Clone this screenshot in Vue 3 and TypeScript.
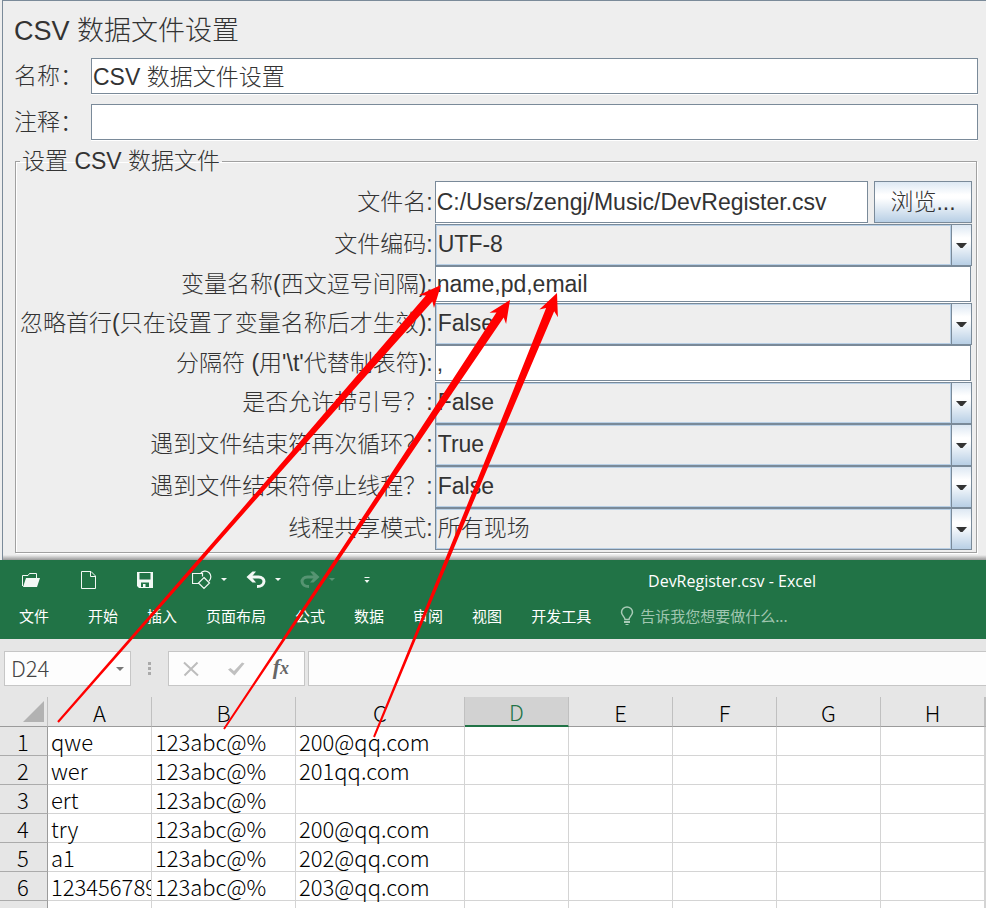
<script setup lang="ts">
import { reactive, ref } from 'vue'

interface Field {
  id: string
  label: string
  kind: 'file' | 'text' | 'select'
  value: string
  options?: string[]
}

interface Arrow {
  from: [number, number]
  to: [number, number]
}

const element = reactive({ name: 'CSV 数据文件设置', comment: '' })

const fields = reactive<Field[]>([
  { id: 'filename', label: '文件名:', kind: 'file', value: 'C:/Users/zengj/Music/DevRegister.csv' },
  { id: 'encoding', label: '文件编码:', kind: 'select', value: 'UTF-8', options: ['UTF-8'] },
  { id: 'variables', label: '变量名称(西文逗号间隔):', kind: 'text', value: 'name,pd,email' },
  { id: 'ignore-first', label: '忽略首行(只在设置了变量名称后才生效):', kind: 'select', value: 'False', options: ['True', 'False'] },
  { id: 'delimiter', label: "分隔符 (用'\\t'代替制表符):", kind: 'text', value: ',' },
  { id: 'quoted', label: '是否允许带引号？:', kind: 'select', value: 'False', options: ['True', 'False'] },
  { id: 'recycle', label: '遇到文件结束符再次循环？:', kind: 'select', value: 'True', options: ['True', 'False'] },
  { id: 'stop-thread', label: '遇到文件结束符停止线程？:', kind: 'select', value: 'False', options: ['True', 'False'] },
  { id: 'share-mode', label: '线程共享模式:', kind: 'select', value: '所有现场', options: ['所有现场'] },
])

const tabs = ['开始', '插入', '页面布局', '公式', '数据', '审阅', '视图', '开发工具']
const cellName = ref('D24')
const formula = ref('')
const columns = ['A', 'B', 'C', 'D', 'E', 'F', 'G', 'H']
const rows: string[][] = [
  ['qwe', '123abc@%', '200@qq.com'],
  ['wer', '123abc@%', '201qq.com'],
  ['ert', '123abc@%', ''],
  ['try', '123abc@%', '200@qq.com'],
  ['a1', '123abc@%', '202@qq.com'],
  ['123456789', '123abc@%', '203@qq.com'],
]

const arrows: Arrow[] = [
  { from: [58, 722], to: [441, 285] },
  { from: [224, 729], to: [510, 300] },
  { from: [374, 737], to: [557, 293] },
]

// Outline of an arrow whose shaft widens towards the head.
function arrowPath({ from, to }: Arrow): string {
  const dx = from[0] - to[0]
  const dy = from[1] - to[1]
  const len = Math.hypot(dx, dy)
  const ux = dx / len
  const uy = dy / len
  const at = (along: number, side: number): string =>
    `${(to[0] + ux * along - uy * side).toFixed(1)} ${(to[1] + uy * along + ux * side).toFixed(1)}`
  const neck = 18
  const mid = (len + neck) / 2
  return [
    `M${at(0, 0)}`,
    `L${at(22, 10)}`,
    `L${at(neck, 4.4)}`,
    `Q${at(mid, 1.6)} ${at(len, 1)}`,
    `L${at(len, -1)}`,
    `Q${at(mid, -1.6)} ${at(neck, -4.4)}`,
    `L${at(22, -10)}Z`,
  ].join('')
}
</script>

<template>
  <div class="page">
    <section class="config">
      <h1 class="config-title">CSV 数据文件设置</h1>
      <div class="line">
        <label for="element-name">名称：</label>
        <input id="element-name" v-model="element.name" class="box" type="text" />
      </div>
      <div class="line">
        <label for="element-comment">注释：</label>
        <input id="element-comment" v-model="element.comment" class="box" type="text" />
      </div>
      <fieldset class="group">
        <legend>设置 CSV 数据文件</legend>
        <div class="fields">
          <template v-for="field in fields" :key="field.id">
            <label :for="field.id">{{ field.label }}</label>
            <div v-if="field.kind === 'file'" class="file">
              <input :id="field.id" v-model="field.value" class="box" type="text" />
              <button type="button" class="browse">浏览...</button>
            </div>
            <div v-else-if="field.kind === 'select'" class="combo">
              <select :id="field.id" v-model="field.value">
                <option v-for="option in field.options" :key="option">{{ option }}</option>
              </select>
              <span class="combo-arrow">
                <svg width="11" height="5" viewBox="0 0 11 5"><path d="M0 0H11L6.5 5H4.5Z" fill="#333" /></svg>
              </span>
            </div>
            <div v-else class="text">
              <input :id="field.id" v-model="field.value" class="box" type="text" />
            </div>
          </template>
        </div>
      </fieldset>
    </section>

    <section class="excel">
      <header class="ribbon">
        <div class="quick">
          <button type="button" aria-label="打开">
            <svg width="20" height="20" viewBox="0 0 20 20">
              <path d="M1.5 16V5.500H7L8.500 3.500H15.500V8" fill="none" stroke="#f3f8f5" />
              <path d="M5 8H19L16 17H2Z" fill="#f3f8f5" />
            </svg>
          </button>
          <button type="button" aria-label="新建">
            <svg width="20" height="20" viewBox="0 0 20 20">
              <path d="M3.500 1.500H13L17.500 6V18.500H3.500ZM12.500 1.500V6.500H17.500" fill="none" stroke="#f3f8f5" />
            </svg>
          </button>
          <button type="button" aria-label="保存">
            <svg width="20" height="20" viewBox="0 0 20 20">
              <path fill-rule="evenodd" d="M2 2H18V18H4L2 16ZM4.500 3V9.500H15.500V3ZM6 12.500V17H8V14H10.500V17H14V12.500Z" fill="#f3f8f5" />
            </svg>
          </button>
          <div class="split">
            <div class="pair">
              <button type="button" aria-label="形状">
                <svg width="20" height="20" viewBox="0 0 20 20">
                  <path d="M8.500 3.500A5.700 5.700 0 1 1 17 11M6.500 13.500H.500V3.500H10.500V6.500M12 7.500L17.500 13L12 18.500L6.500 13Z" fill="none" stroke="#f3f8f5" stroke-width="1.200" />
                </svg>
              </button>
              <button type="button" aria-label="更多形状"><svg width="10" height="4" viewBox="0 0 10 4"><path d="M2 0H8L5 3Z" fill="#f3f8f5" /></svg></button>
            </div>
            <div class="pair">
              <button type="button" aria-label="撤消">
                <svg width="20" height="20" viewBox="0 0 20 20">
                  <path d="M3 7H12.500C20 7 20 16.500 11 16.500" fill="none" stroke="#f3f8f5" stroke-width="3" />
                  <path d="M.500 7L6.500 1.500H10L5.500 7L10 12.500H6.500Z" fill="#f3f8f5" />
                </svg>
              </button>
              <button type="button" aria-label="撤消列表"><svg width="10" height="4" viewBox="0 0 10 4"><path d="M2 0H8L5 3Z" fill="#f3f8f5" /></svg></button>
            </div>
            <div class="pair faded">
              <button type="button" aria-label="恢复" disabled>
                <svg width="20" height="20" viewBox="0 0 20 20">
                  <path d="M17 7H7.500C0 7 0 16.500 9 16.500" fill="none" stroke="#f3f8f5" stroke-width="3" />
                  <path d="M19.500 7L13.500 1.500H10L14.500 7L10 12.500H13.500Z" fill="#f3f8f5" />
                </svg>
              </button>
              <button type="button" aria-label="恢复列表" disabled><svg width="10" height="4" viewBox="0 0 10 4"><path d="M2 0H8L5 3Z" fill="#f3f8f5" /></svg></button>
            </div>
            <button type="button" class="more" aria-label="自定义">
              <svg width="10" height="8" viewBox="0 0 10 8"><path d="M2.500 1H7.500V2H2.500ZM2.500 4H7.500L5 7Z" fill="#f3f8f5" /></svg>
            </button>
          </div>
          <p class="book">DevRegister.csv - Excel</p>
        </div>
        <nav class="tabs">
          <button type="button" class="file-tab">文件</button>
          <button v-for="tab in tabs" :key="tab" type="button">{{ tab }}</button>
          <button type="button" class="tell">
            <svg width="14" height="20" viewBox="0 0 14 20">
              <path d="M5 13.500C5 11 1.500 9.500 1.500 6.200A5.500 5.200 0 0 1 12.500 6.200C12.500 9.500 9 11 9 13.500Z" fill="none" stroke="#a9cbb7" stroke-width="1.500" />
              <path d="M4 15H10V17H4ZM5.500 18H8.500V19H5.500Z" fill="#a9cbb7" />
            </svg>
            告诉我您想要做什么...
          </button>
        </nav>
      </header>

      <div class="formula-bar">
        <div class="name-box">
          <input v-model="cellName" type="text" aria-label="名称框" />
          <svg width="8" height="4" viewBox="0 0 8 4"><path d="M0 0H8L4 4Z" fill="#777" /></svg>
        </div>
        <svg class="grip" width="3" height="14" viewBox="0 0 3 14"><path d="M0 0H3V3H0ZM0 5H3V8H0ZM0 10H3V13H0Z" fill="#aaa" /></svg>
        <div class="actions">
          <button type="button" aria-label="取消">
            <svg width="18" height="18" viewBox="0 0 18 18"><path d="M2 2.500L16 15.500M15.500 2.500L2.500 15.500" stroke="#bdbdbd" stroke-width="2" /></svg>
          </button>
          <button type="button" aria-label="输入">
            <svg width="18" height="18" viewBox="0 0 18 18"><path d="M1 9.500L3.500 8L7 11L15 2.500L17.500 3.500L7.500 15.500Z" fill="#c0c0c0" /></svg>
          </button>
          <button type="button" class="fx"><i>f</i><i class="fx-x">x</i></button>
        </div>
        <input v-model="formula" class="formula" type="text" aria-label="编辑栏" />
      </div>

      <div class="sheet">
        <table>
          <colgroup>
            <col class="w-head" />
            <col class="w-narrow" />
            <col class="w-b" />
            <col class="w-c" />
            <col v-for="n in 5" :key="n" class="w-narrow" />
            <col />
          </colgroup>
          <thead>
            <tr>
              <th class="corner">
                <svg width="21" height="21" viewBox="0 0 21 21"><path d="M21 0V21H0Z" fill="#b2b2b2" /></svg>
              </th>
              <th v-for="column in columns" :key="column" scope="col" :class="{ selected: column === 'D' }">{{ column }}</th>
              <th></th>
            </tr>
          </thead>
          <tbody>
            <tr v-for="(row, index) in rows" :key="index">
              <th scope="row">{{ index + 1 }}</th>
              <td v-for="(column, c) in columns" :key="column"><div class="cell">{{ row[c] ?? '' }}</div></td>
              <td></td>
            </tr>
            <tr>
              <th></th>
              <td v-for="column in columns" :key="column"></td>
              <td></td>
            </tr>
          </tbody>
        </table>
      </div>
    </section>

    <svg class="arrows" width="986" height="908" viewBox="0 0 986 908" aria-hidden="true">
      <path v-for="(arrow, index) in arrows" :key="index" :d="arrowPath(arrow)" fill="#f00" />
    </svg>
  </div>
</template>

<style>
body {
  background: #fff;
}
</style>

<style scoped>
.page {
  position: relative;
  display: flex;
  flex-direction: column;
  height: 100vh;
  overflow: hidden;
  background: #eee;
}

.page *,
.page *::before,
.page *::after {
  box-sizing: border-box;
}

button,
input,
select {
  margin: 0;
  padding: 0;
  border: 0;
  border-radius: 0;
  outline: 0;
  background: none;
  color: inherit;
  font: inherit;
}

svg {
  display: block;
  flex: none;
}

.config {
  position: relative;
  flex: none;
  margin-left: 2px;
  padding: 0 8px 7px 11px;
  border-top: 1px solid #7a8a99;
  border-left: 1px solid #7a8a99;
  color: #333;
  font: 300 23px/28px "Liberation Sans", "Noto Sans CJK SC", sans-serif;
}

.config::after {
  content: "";
  position: absolute;
  right: 0;
  bottom: 0;
  left: 0;
  height: 5px;
  background: linear-gradient(#eee, #999);
}

.config-title {
  height: 57px;
  margin: 0;
  font-size: 27px;
  font-weight: 300;
  line-height: 60px;
}

.line {
  display: flex;
  align-items: center;
  height: 36px;
  margin-bottom: 10px;
}

.line label {
  width: 77px;
}

.box {
  flex: 1;
  min-width: 0;
  height: 100%;
  padding: 0 1px;
  border: 1px solid #7a8a99;
  background: #fff;
  box-shadow: 0 1px #fff;
}

.line .box {
  padding-bottom: 3px;
}

.group {
  min-width: 0;
  margin: -3px 1px 0;
  padding: 6px 4px 2px;
  border: 1px solid #a0a0a0;
  box-shadow: inset 1px 1px #fff, 1px 1px #fff;
}

.group legend {
  padding: 0 2px;
}

.fields {
  display: grid;
  grid-template-columns: auto 1fr;
  column-gap: 2px;
  align-items: center;
}

.fields label {
  padding-bottom: 2px;
  text-align: right;
  white-space: nowrap;
}

.file {
  display: flex;
  gap: 6px;
  height: 43px;
  padding-bottom: 1px;
}

.browse {
  width: 98px;
  border: 1px solid #7a8a99;
  background: linear-gradient(#dde8f3, #fff 32%, #fff 40%, #b8cfe5);
}

.text {
  display: flex;
  height: 37px;
  padding: 0 1px 1px 0;
}

.combo {
  display: flex;
  height: 42px;
  border: 1px solid #7a8a99;
}

.combo select {
  flex: 1;
  min-width: 0;
  appearance: none;
  padding: 0 1px 2px;
  border: 1px solid #b8cfe5;
  background: #eee;
}

.combo-arrow {
  display: flex;
  align-items: center;
  justify-content: center;
  width: 20px;
  border-left: 1px solid #7a8a99;
  background: linear-gradient(#dde8f3, #fff 32%, #fff 40%, #b8cfe5);
}

.excel {
  display: flex;
  flex: 1;
  flex-direction: column;
  min-height: 0;
  background: #e6e6e6;
}

.ribbon {
  flex: none;
  background: #217346;
  color: #fff;
  font: 15px/20px "Noto Sans CJK SC", sans-serif;
}

.quick {
  display: flex;
  align-items: center;
  gap: 37px;
  height: 40px;
  padding-left: 21px;
}

.split {
  display: flex;
  align-items: center;
  gap: 17px;
}

.pair {
  display: flex;
  align-items: center;
  gap: 7px;
}

.faded {
  opacity: 0.25;
}

.more {
  display: flex;
  justify-content: center;
  width: 26px;
}

.book {
  flex: 1;
  margin: 0;
  padding-left: 61px;
  padding-top: 2px;
  font-family: "Open Sans", sans-serif;
  font-size: 16px;
  text-align: center;
}

.tabs {
  display: flex;
  gap: 29px;
  align-items: center;
  height: 39px;
  padding: 0 19px 8px;
}

.tabs button {
  white-space: nowrap;
}

.tabs .file-tab {
  margin-right: 10px;
}

.tabs .tell {
  display: flex;
  align-items: center;
  gap: 6px;
  color: #a0c6b0;
}

.formula-bar {
  display: flex;
  flex: none;
  align-items: center;
  height: 58px;
  padding: 12px 0 11px 4px;
}

.name-box {
  display: flex;
  align-items: center;
  width: 127px;
  height: 35px;
  padding: 0 6px;
  border: 1px solid #c6c6c6;
  background: #fdfdfd;
}

.name-box input {
  flex: 1;
  min-width: 0;
  height: 33px;
  padding-bottom: 4px;
  color: #444;
  font: 300 22px/28px "Noto Sans CJK SC", sans-serif;
}

.grip {
  margin: 0 17px;
}

.actions {
  display: flex;
  align-items: center;
  justify-content: space-between;
  width: 137px;
  height: 35px;
  margin-right: 3px;
  padding: 0 15px 0 13px;
  border: 1px solid #c6c6c6;
  background: #fdfdfd;
}

.fx {
  padding-bottom: 3px;
  color: #666;
  font: bold 22px/30px "Liberation Serif", serif;
}

.fx-x {
  font-size: 18px;
}

.formula {
  flex: 1;
  min-width: 0;
  height: 35px;
  border: 1px solid #c6c6c6;
  border-right: 0;
  background: #fdfdfd;
}

.sheet {
  flex: 1;
  min-height: 0;
  overflow: hidden;
  background: #fff;
}

table {
  width: 100%;
  border-spacing: 0;
  table-layout: fixed;
  color: #000;
  font: 300 22px/28px "Noto Sans CJK SC", sans-serif;
}

.w-head {
  width: 48px;
}

.w-narrow {
  width: 104px;
}

.w-b {
  width: 144px;
}

.w-c {
  width: 169px;
}

th,
td {
  height: 29px;
  padding: 0 0 0 3px;
  border-right: 1px solid #d4d4d4;
  border-bottom: 1px solid #d4d4d4;
  font-weight: 300;
  text-align: left;
  white-space: nowrap;
}

.cell {
  overflow-x: clip;
  overflow-y: visible;
}

th {
  padding: 0;
  border-color: #ababab;
  background: #e6e6e6;
  text-align: center;
}

thead th {
  height: 30px;
  border-right-color: #c0c0c0;
  border-bottom-color: #9b9b9b;
}

tbody th {
  padding-right: 1px;
  border-right-color: #9b9b9b;
}

.corner {
  padding-right: 3px;
}

.corner svg {
  margin-left: auto;
}

th.selected {
  border-bottom: 2px solid #217346;
  background: #d2d2d2;
  color: #217346;
  line-height: 27px;
}

.arrows {
  position: absolute;
  top: 0;
  left: 0;
  pointer-events: none;
}
</style>
